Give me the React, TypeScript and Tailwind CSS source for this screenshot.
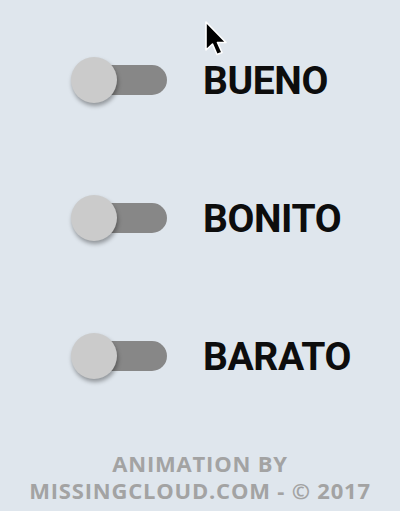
import React from 'react'

function Toggle() {
  return (
    <div className="relative w-[96px] h-[46px] flex items-center">
      <div className="absolute left-[8px] right-0 h-[30px] rounded-full bg-[#878787]" />
      <div className="absolute left-0 w-[46px] h-[46px] rounded-full bg-[#cbcbcb] shadow-[1px_3px_4px_rgba(0,0,0,0.35)]" />
    </div>
  )
}

const labels = ['BUENO', 'BONITO', 'BARATO']

export default function App() {
  return (
    <div className="relative w-full h-[511px] bg-[#dfe6ed] flex flex-col overflow-hidden">
      <div className="flex flex-col pt-[11px]">
        {labels.map((label) => (
          <div key={label} className="h-[138px] flex items-center pl-[71px] gap-[36px]">
            <Toggle />
            <span className="font-['Roboto',sans-serif] font-bold text-[39px] leading-none text-[#0d0d0d] tracking-[-0.4px] pt-[3px]">
              {label}
            </span>
          </div>
        ))}
      </div>
      <div className="mt-auto pb-[7px] flex flex-col items-center font-['Open_Sans',sans-serif] font-bold text-[#a3a3a3] text-[22px] leading-[27px] tracking-[0.8px]">
        <span>ANIMATION BY</span>
        <span>MISSINGCLOUD.COM - © 2017</span>
      </div>
      <svg className="absolute left-[204px] top-[21px]" width="26" height="36" viewBox="0 0 26 36">
        <path d="M2 1 L2 29 L8.5 23 L13 33.5 L18 31.5 L13.5 21.5 L22 21.5 Z" fill="#000" stroke="#fff" strokeWidth="1.6" strokeLinejoin="round" />
      </svg>
    </div>
  )
}
